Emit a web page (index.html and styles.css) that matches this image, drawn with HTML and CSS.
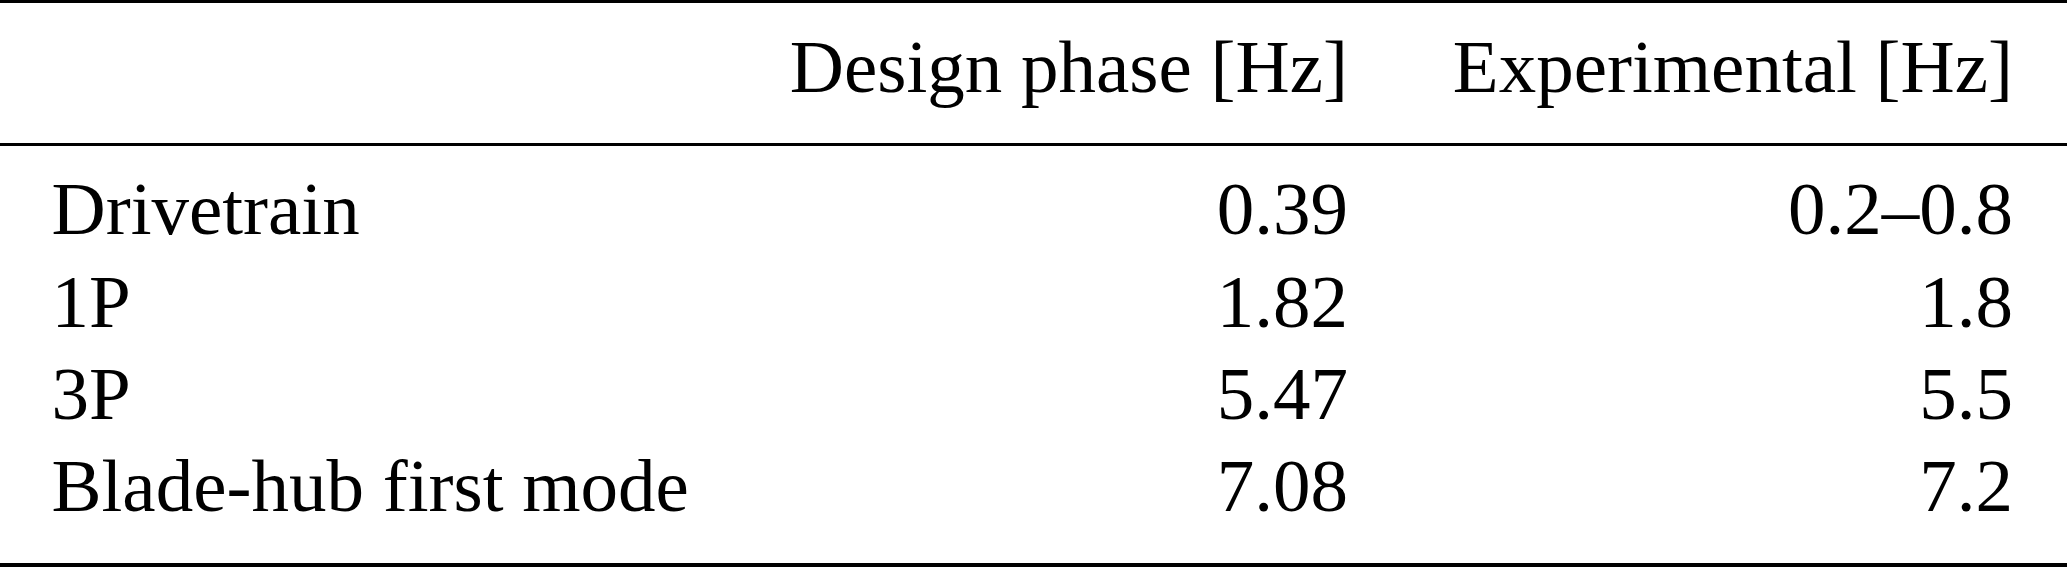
FILE: index.html
```html
<!DOCTYPE html>
<html lang="en">
<head>
<meta charset="utf-8">
<title>Natural frequencies</title>
<link rel="stylesheet" href="styles.css">
</head>
<body>
<div class="frame">
  <table class="freq">
    <colgroup>
      <col class="c-label">
      <col class="c-design">
      <col class="c-exp">
    </colgroup>
    <thead>
      <tr>
        <th class="label"></th>
        <th class="num">Design phase [Hz]</th>
        <th class="num last">Experimental [Hz]</th>
      </tr>
    </thead>
    <tbody>
      <tr class="first">
        <td class="label">Drivetrain</td>
        <td class="num">0.39</td>
        <td class="num last">0.2–0.8</td>
      </tr>
      <tr>
        <td class="label">1P</td>
        <td class="num">1.82</td>
        <td class="num last">1.8</td>
      </tr>
      <tr>
        <td class="label">3P</td>
        <td class="num">5.47</td>
        <td class="num last">5.5</td>
      </tr>
      <tr class="final">
        <td class="label">Blade-hub first mode</td>
        <td class="num">7.08</td>
        <td class="num last">7.2</td>
      </tr>
    </tbody>
  </table>
</div>
</body>
</html>
```
FILE: styles.css
```css
html, body {
  margin: 0;
  padding: 0;
  background: #ffffff;
}

.frame {
  width: 2067px;
  border-top: 3px solid #000;
  border-bottom: 4px solid #000;
  margin-top: 0;
  box-sizing: border-box;
}

.freq {
  width: 2067px;
  table-layout: fixed;
  border-collapse: separate;
  border-spacing: 0;
  font-family: "Liberation Serif", "Times New Roman", serif;
  font-size: 75px;
  line-height: 92.3px;
  color: #000;
}

.c-label { width: 700px; }
.c-design { width: 694px; }
.c-exp { width: 673px; }

.freq th,
.freq td {
  padding: 0;
  font-weight: normal;
  white-space: nowrap;
  vertical-align: baseline;
}

.freq thead th {
  padding-top: 17.5px;
  padding-bottom: 30.2px;
  border-bottom: 3px solid #000;
}

.freq .label {
  text-align: left;
  padding-left: 51.5px;
}

.freq .num {
  text-align: right;
  padding-right: 46px;
}

.freq .num.last {
  padding-right: 54px;
}

.freq tbody tr.first td {
  padding-top: 17.5px;
}

.freq tbody tr.final td {
  padding-bottom: 30.3px;
}
```
